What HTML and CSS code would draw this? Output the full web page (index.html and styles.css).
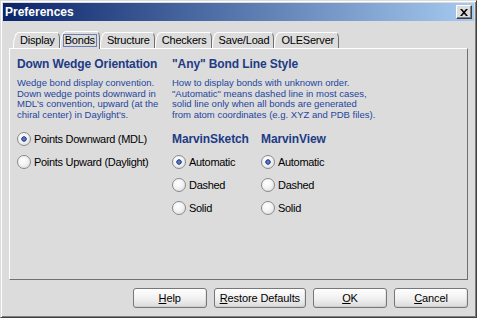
FILE: index.html
```html
<!DOCTYPE html>
<html>
<head>
<meta charset="utf-8">
<title>Preferences</title>
<link rel="stylesheet" href="styles.css">
</head>
<body>
<div class="window">
  <div class="titlebar">
    <span class="title">Preferences</span>
    <button class="close" aria-label="Close">
      <svg width="8" height="7" viewBox="0 0 8 7"><path d="M0 0h2l2 2.3L6 0h2L5 3.5 8 7H6L4 4.7 2 7H0l3-3.5z" fill="#000"/></svg>
    </button>
  </div>
  <div class="body">
    <div class="tabs">
      <div class="tab">Display</div>
      <div class="tab selected"><span class="focus">Bonds</span></div>
      <div class="tab">Structure</div>
      <div class="tab">Checkers</div>
      <div class="tab">Save/Load</div>
      <div class="tab">OLEServer</div>
    </div>
    <div class="panel">
      <div class="col col-left">
        <h2 class="heading">Down Wedge Orientation</h2>
        <p class="desc">Wedge bond display convention.<br>Down wedge points downward in<br>MDL's convention, upward (at the<br>chiral center) in Daylight's.</p>
        <div class="options">
          <label class="radio checked"><span class="dot"></span>Points Downward (MDL)</label>
          <label class="radio"><span class="dot"></span>Points Upward (Daylight)</label>
        </div>
      </div>
      <div class="col col-right">
        <h2 class="heading">"Any" Bond Line Style</h2>
        <p class="desc">How to display bonds with unknown order.<br>"Automatic" means dashed line in most cases,<br>solid line only when all bonds are generated<br>from atom coordinates (e.g. XYZ and PDB files).</p>
        <div class="options grid2">
          <h3 class="subheading">MarvinSketch</h3>
          <h3 class="subheading">MarvinView</h3>
          <label class="radio checked"><span class="dot"></span>Automatic</label>
          <label class="radio checked"><span class="dot"></span>Automatic</label>
          <label class="radio"><span class="dot"></span>Dashed</label>
          <label class="radio"><span class="dot"></span>Dashed</label>
          <label class="radio"><span class="dot"></span>Solid</label>
          <label class="radio"><span class="dot"></span>Solid</label>
        </div>
      </div>
    </div>
    <div class="buttons">
      <button class="btn"><u>H</u>elp</button>
      <button class="btn"><u>R</u>estore Defaults</button>
      <button class="btn"><u>O</u>K</button>
      <button class="btn"><u>C</u>ancel</button>
    </div>
  </div>
</div>
</body>
</html>
```

FILE: styles.css
```css
html, body {
  margin: 0;
  padding: 0;
  background: #dcdcdc;
}

body {
  font-family: "Liberation Sans", Tahoma, Arial, sans-serif;
  font-size: 11px;
  color: #000;
}

.window {
  width: 477px;
  height: 318px;
  box-sizing: border-box;
  border: 1px solid;
  border-color: #dcdcdc #404040 #404040 #dcdcdc;
  box-shadow: inset 1px 1px #ffffff, inset -1px -1px #808080;
  padding: 2px;
  display: flex;
  flex-direction: column;
  background: #dcdcdc;
}

.titlebar {
  flex: none;
  height: 18px;
  display: flex;
  align-items: center;
  justify-content: space-between;
  padding: 0 2px;
  background: linear-gradient(to right, #0a246a, #a6caf0);
}

.title {
  color: #fff;
  font-weight: bold;
  font-size: 12px;
  line-height: 18px;
}

.close {
  width: 16px;
  height: 14px;
  box-sizing: border-box;
  padding: 0;
  margin: 0;
  border: 1px solid;
  border-color: #ffffff #404040 #404040 #ffffff;
  box-shadow: inset -1px -1px #808080;
  background: #dcdcdc;
  display: flex;
  align-items: center;
  justify-content: center;
}

.close svg {
  display: block;
}

.body {
  flex: 1;
  display: flex;
  flex-direction: column;
  padding: 10px 6px 7px;
}

.tabs {
  flex: none;
  display: flex;
  align-items: flex-end;
  height: 17px;
  padding-left: 4px;
}

.tab {
  height: 16px;
  box-sizing: border-box;
  padding: 0 4px 0 6px;
  border-top: 1px solid #ffffff;
  border-left: 1px solid #ffffff;
  border-right: 1px solid #6e6e6e;
  border-radius: 6px 3px 0 0 / 14px 7px 0 0;
  font-size: 11px;
  line-height: 15px;
  letter-spacing: -0.2px;
  white-space: nowrap;
  background: #dcdcdc;
}

.tab.selected {
  height: 18px;
  margin-bottom: -1px;
  padding-top: 1px;
  position: relative;
  z-index: 1;
  padding-left: 2px;
  padding-right: 2px;
}

.focus {
  display: inline-block;
  border: 1px solid #6b7fb2;
  padding: 0 1px;
  line-height: 11px;
  height: 11px;
}

.panel {
  flex: none;
  height: 232px;
  box-sizing: border-box;
  border: 1px solid;
  border-color: #ffffff #707070 #707070 #ffffff;
  display: flex;
  padding: 8px 7px;
}

.col-left {
  width: 155px;
  flex: none;
}

.col-right {
  flex: 1;
}

.heading,
.subheading {
  margin: 0;
  font-size: 12px;
  line-height: 15px;
  font-weight: bold;
  color: #213b85;
  letter-spacing: -0.1px;
  white-space: nowrap;
}

.desc {
  margin: 6px 0 0;
  font-size: 9.5px;
  line-height: 10.67px;
  color: #24469c;
  white-space: nowrap;
}

.options {
  margin-top: 7px;
}

.grid2 {
  display: grid;
  grid-template-columns: 89px auto;
  grid-auto-rows: 23px;
  align-items: center;
}

.radio {
  display: flex;
  align-items: center;
  gap: 3px;
  height: 23px;
  font-size: 11px;
  letter-spacing: -0.3px;
  white-space: nowrap;
}

.dot {
  flex: none;
  width: 14px;
  height: 14px;
  box-sizing: border-box;
  border-radius: 50%;
  border: 1px solid #8a8a8a;
  background: radial-gradient(circle at 40% 35%, #ffffff 0, #f3f3f3 45%, #d6d6d6 100%);
}

.radio.checked .dot {
  background:
    radial-gradient(circle at 50% 50%, #7d95d2 0, #3e5aa8 1.6px, #2c4590 2.4px, rgba(44, 69, 144, 0) 3px),
    radial-gradient(circle at 40% 35%, #ffffff 0, #f3f3f3 45%, #d6d6d6 100%);
}

.buttons {
  flex: none;
  display: flex;
  justify-content: flex-end;
  gap: 7px;
  margin-top: 8px;
}

.btn {
  min-width: 74px;
  height: 20px;
  box-sizing: border-box;
  padding: 0 5px;
  margin: 0;
  border: 1px solid #777777;
  border-radius: 3px;
  background: linear-gradient(#fefefe, #f0f0f0 55%, #dadada);
  box-shadow: inset -1px -1px rgba(0, 0, 0, 0.06);
  font-family: "Liberation Sans", Tahoma, Arial, sans-serif;
  font-size: 11px;
  letter-spacing: -0.1px;
  color: #000;
  line-height: 18px;
}
```
